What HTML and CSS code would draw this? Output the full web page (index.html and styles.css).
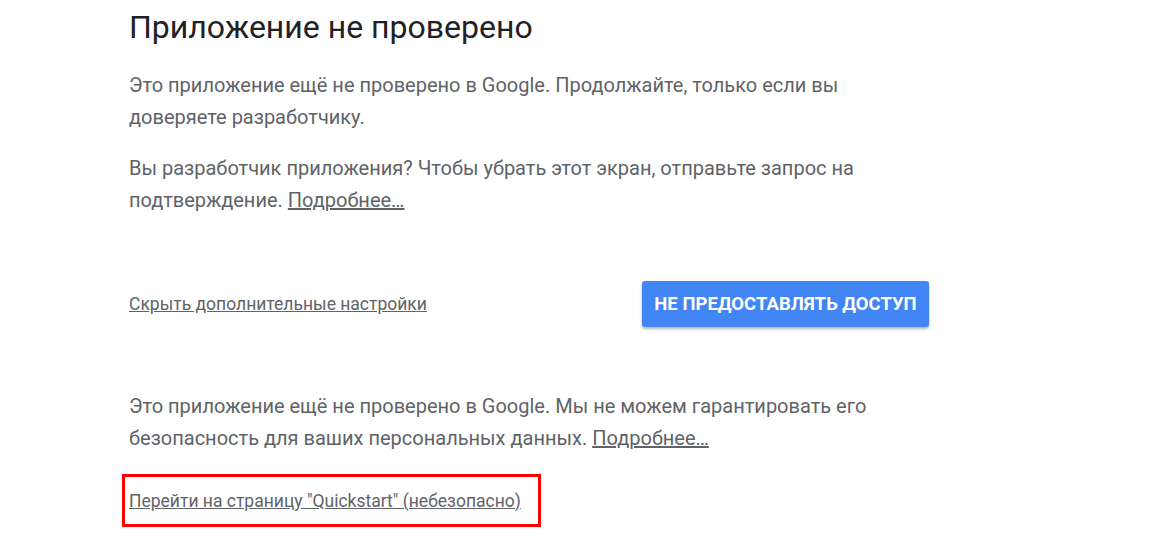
FILE: index.html
```html
<!DOCTYPE html>
<html lang="ru">
<head>
<meta charset="utf-8">
<link rel="stylesheet" href="styles.css">
</head>
<body>
<main class="page">
  <h1 class="title">Приложение не проверено</h1>
  <p class="text">Это приложение ещё не проверено в Google. Продолжайте, только если вы доверяете разработчику.</p>
  <p class="text">Вы разработчик приложения? Чтобы убрать этот экран, отправьте запрос на подтверждение. <a class="link" href="#">Подробнее…</a></p>
  <div class="actions">
    <a class="small-link" href="#">Скрыть дополнительные настройки</a>
    <button class="btn">Не предоставлять доступ</button>
  </div>
  <p class="text text-warn">Это приложение ещё не проверено в Google. Мы не можем гарантировать его безопасность для ваших персональных данных. <a class="link" href="#">Подробнее…</a></p>
  <div class="highlight">
    <a class="small-link" href="#">Перейти на страницу "Quickstart" (небезопасно)</a>
  </div>
</main>
</body>
</html>
```
FILE: styles.css
```css
html, body {
  margin: 0;
  padding: 0;
  background: #ffffff;
}
body {
  font-family: Roboto, "Noto Sans", Arial, sans-serif;
  width: 1162px;
  height: 557px;
  overflow: hidden;
}
.page {
  padding: 0 0 0 129px;
  width: 800px;
}
.title {
  margin: 7px 0 0 0;
  font-size: 32px;
  font-weight: 400;
  line-height: 40px;
  color: #202124;
}
.text {
  margin: 22px 0 0 0;
  font-size: 20px;
  line-height: 32px;
  color: #5f6368;
  width: 770px;
}
.text + .text {
  margin-top: 19px;
}
.link {
  color: #5f6368;
  text-decoration: underline;
}
.actions {
  display: flex;
  align-items: center;
  justify-content: space-between;
  margin-top: 65px;
  width: 800px;
}
.small-link {
  font-size: 17.5px;
  color: #5f6368;
  text-decoration: underline;
}
.btn {
  font-family: Roboto, Arial, sans-serif;
  font-weight: 700;
  font-size: 18.5px;
  text-transform: uppercase;
  color: #ffffff;
  background: #4285f4;
  border: none;
  border-radius: 3px;
  height: 46px;
  width: 287px;
  padding: 0;
  box-shadow: 0 2px 3px rgba(0,0,0,0.3);
}
.text-warn {
  margin-top: 63px;
}
.highlight {
  margin: 20px 0 0 -7px;
  width: 409px;
  height: 47px;
  border: 3px solid #ff0000;
  display: flex;
  align-items: center;
  padding-left: 4px;
  box-sizing: content-box;
}
```
